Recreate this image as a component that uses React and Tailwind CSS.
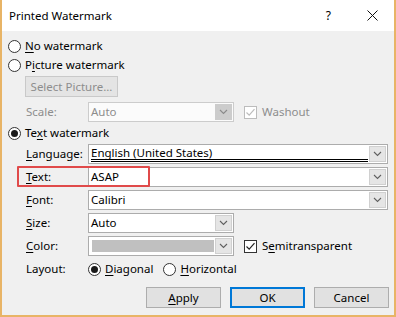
import React from 'react';

const Radio = ({ checked }) => (
  <span className="w-[13px] h-[13px] rounded-full border border-[#333333] bg-white flex items-center justify-center shrink-0">
    {checked && <span className="w-[7px] h-[7px] rounded-full bg-[#1a1a1a]" />}
  </span>
);

const Check = ({ checked, disabled }) => (
  <span className={`w-[13px] h-[13px] border bg-white flex items-center justify-center shrink-0 ${disabled ? 'border-[#bcbcbc]' : 'border-[#333333]'}`}>
    {checked && (
      <svg width="11" height="11" viewBox="0 0 11 11">
        <path d="M1.5 5.5 L4.2 8.2 L9.5 2.2" fill="none" stroke={disabled ? '#bcbcbc' : '#222'} strokeWidth="1.2" />
      </svg>
    )}
  </span>
);

const Chevron = ({ color = '#555' }) => (
  <svg width="9" height="6" viewBox="0 0 9 6">
    <path d="M1 1 L4.5 4.5 L8 1" fill="none" stroke={color} strokeWidth="1.1" />
  </svg>
);

const Combo = ({ width, children, disabled }) => (
  <div className={`h-[20px] flex border ${disabled ? 'border-[#cccccc] bg-[#fbfbfb]' : 'border-[#acacac] bg-white'}`} style={{ width }}>
    <div className="flex-1 flex items-center pl-[2px]">{children}</div>
    <div className={`w-[17px] m-[1px] flex items-center justify-center border ${disabled ? 'bg-[#cccccc] border-[#cccccc]' : 'bg-[#e5e5e5] border-[#d0d0d0]'}`}>
      <Chevron color={disabled ? '#8a8a8a' : '#606060'} />
    </div>
  </div>
);

const Label = ({ k, rest, gray }) => (
  <span className={`w-[62px] shrink-0 ${gray ? 'text-[#8d8d8d]' : 'text-black'}`}>
    {k && <span className="underline underline-offset-2">{k}</span>}
    {rest}
  </span>
);

const Btn = ({ children, primary }) => (
  <button className={`w-[75px] h-[21px] bg-[#e1e1e1] flex items-center justify-center text-black ${primary ? 'border-2 border-[#0078d7]' : 'border border-[#adadad]'}`}>
    {children}
  </button>
);

export default function App() {
  return (
    <div
      className="w-[396px] h-[317px] bg-[#f0f0f0] border-l-2 border-r-2 border-b-2 border-[#e8b466] flex flex-col text-[11.5px] leading-none text-black relative"
      style={{ fontFamily: '"Noto Sans", "Open Sans", sans-serif' }}
    >
      <div className="h-[31px] bg-white flex items-center shrink-0">
        <span className="pl-[7px] flex-1 text-[11.5px]">Printed Watermark</span>
        <span className="text-[12px] mr-[36px]">?</span>
        <svg width="11" height="11" viewBox="0 0 11 11" className="mr-[16px]">
          <path d="M0.5 0.5 L10.5 10.5 M10.5 0.5 L0.5 10.5" stroke="#111" strokeWidth="1" />
        </svg>
      </div>

      <div className="flex flex-col pl-[6px]">
        <div className="h-[16px] mt-[7px] flex items-center gap-[4px]">
          <Radio />
          <span><span className="underline underline-offset-2">N</span>o watermark</span>
        </div>
        <div className="h-[16px] mt-[3px] flex items-center gap-[4px]">
          <Radio />
          <span>P<span className="underline underline-offset-2">i</span>cture watermark</span>
        </div>
        <div className="pl-[17px] mt-[3px]">
          <div className="w-[93px] h-[21px] border border-[#c9c9c9] bg-[#e4e4e4] flex items-center justify-center text-[#8d8d8d]">
            Select Picture...
          </div>
        </div>
        <div className="h-[20px] mt-[5px] pl-[18px] flex items-center">
          <Label rest="Scale:" gray />
          <Combo width={146} disabled><span className="text-[#8d8d8d]">Auto</span></Combo>
          <div className="ml-[10px] flex items-center gap-[5px] text-[#8d8d8d]">
            <Check checked disabled />
            <span>Washout</span>
          </div>
        </div>
        <div className="h-[16px] mt-[3px] flex items-center gap-[4px]">
          <Radio checked />
          <span>Te<span className="underline underline-offset-2">x</span>t watermark</span>
        </div>
        <div className="h-[20px] mt-[3px] pl-[18px] flex items-center">
          <Label k="L" rest="anguage:" />
          <Combo width={300}>
            <span className="w-full leading-[12px] border-b-[3px] border-double border-black whitespace-nowrap">English (United States)</span>
          </Combo>
        </div>
        <div className="h-[20px] mt-[3px] pl-[18px] flex items-center">
          <Label k="T" rest="ext:" />
          <Combo width={300}>ASAP</Combo>
        </div>
        <div className="h-[20px] mt-[3px] pl-[18px] flex items-center">
          <Label k="F" rest="ont:" />
          <Combo width={300}>Calibri</Combo>
        </div>
        <div className="h-[20px] mt-[3px] pl-[18px] flex items-center">
          <Label k="S" rest="ize:" />
          <Combo width={146}>Auto</Combo>
        </div>
        <div className="h-[20px] mt-[3px] pl-[18px] flex items-center">
          <Label k="C" rest="olor:" />
          <Combo width={146}>
            <span className="w-[122px] h-[12px] bg-[#c0c0c0] ml-[1px]" />
          </Combo>
          <div className="ml-[10px] flex items-center gap-[5px]">
            <Check checked />
            <span>S<span className="underline underline-offset-2">e</span>mitransparent</span>
          </div>
        </div>
        <div className="h-[16px] mt-[5px] pl-[18px] flex items-center">
          <Label rest="Layout:" />
          <div className="flex items-center gap-[4px]">
            <Radio checked />
            <span><span className="underline underline-offset-2">D</span>iagonal</span>
          </div>
          <div className="flex items-center gap-[4px] ml-[10px]">
            <Radio />
            <span><span className="underline underline-offset-2">H</span>orizontal</span>
          </div>
        </div>
        <div className="mt-[10px] flex justify-end gap-[9px] pr-[5px]">
          <Btn><span><span className="underline underline-offset-2">A</span>pply</span></Btn>
          <Btn primary>OK</Btn>
          <Btn>Cancel</Btn>
        </div>
      </div>

      <div className="absolute left-[15px] top-[166px] w-[133px] h-[21px] border-2 border-[#e04a4a] rounded-[1px] pointer-events-none" />
    </div>
  );
}
